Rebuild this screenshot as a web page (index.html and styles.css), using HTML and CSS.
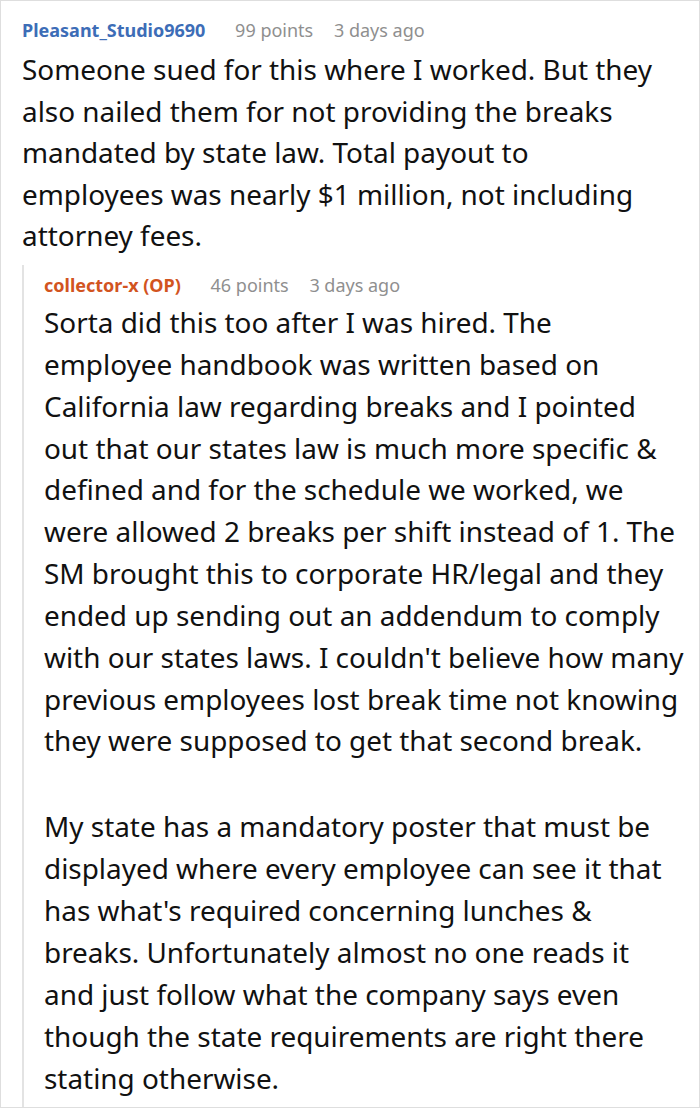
FILE: index.html
```html
<!DOCTYPE html>
<html>
<head>
<meta charset="utf-8">
<link rel="stylesheet" href="styles.css">
</head>
<body>
<div class="frame">
  <div class="comment">
    <div class="meta">
      <span class="user">Pleasant_Studio9690</span>
      <span class="points">99 points</span>
      <span class="time">3 days ago</span>
    </div>
    <div class="body top-body">
      <p>Someone sued for this where I worked. But they also nailed them for not providing the breaks mandated by state law. Total payout to employees was nearly $1 million, not including attorney fees.</p>
    </div>
    <div class="reply">
      <div class="meta">
        <span class="user op">collector-x (OP)</span>
        <span class="points">46 points</span>
        <span class="time">3 days ago</span>
      </div>
      <div class="body">
        <p>Sorta did this too after I was hired. The employee handbook was written based on California law regarding breaks and I pointed out that our states law is much more specific &amp; defined and for the schedule we worked, we were allowed 2 breaks per shift instead of 1. The SM brought this to corporate HR/legal and they ended up sending out an addendum to comply with our states laws. I couldn't believe how many previous employees lost break time not knowing they were supposed to get that second break.</p>
        <p>My state has a mandatory poster that must be displayed where every employee can see it that has what's required concerning lunches &amp; breaks. Unfortunately almost no one reads it and just follow what the company says even though the state requirements are right there stating otherwise.</p>
      </div>
    </div>
  </div>
</div>
</body>
</html>
```

FILE: styles.css
```css
html, body {
  margin: 0;
  padding: 0;
  background: #fff;
}
.frame {
  box-sizing: border-box;
  width: 700px;
  height: 1108px;
  border: 1px solid #dedede;
  padding: 17px 14px 0 21px;
  font-family: "Noto Sans", "Open Sans", sans-serif;
  color: #1a1a1b;
  overflow: hidden;
}
.meta {
  font-size: 18px;
  line-height: 24px;
  white-space: nowrap;
}
.user {
  font-weight: 700;
  color: #3d6db7;
}
.user.op {
  color: #d2541f;
}
.points, .time {
  color: #8f8f8f;
}
.points {
  margin-left: 25px;
}
.time {
  margin-left: 16px;
}
.body {
  margin-top: 7px;
  font-size: 27.9px;
  line-height: 41.6px;
  color: #111;
}
.top-body {
  padding-right: 10px;
}
.body p {
  margin: 0;
}
.body p + p {
  margin-top: 44.2px;
}
.reply {
  margin-top: 8px;
  border-left: 2px solid #e3e3e3;
  padding: 8px 0 12px 20px;
}
.reply .body {
  margin-top: 5px;
  line-height: 41.85px;
}
```
